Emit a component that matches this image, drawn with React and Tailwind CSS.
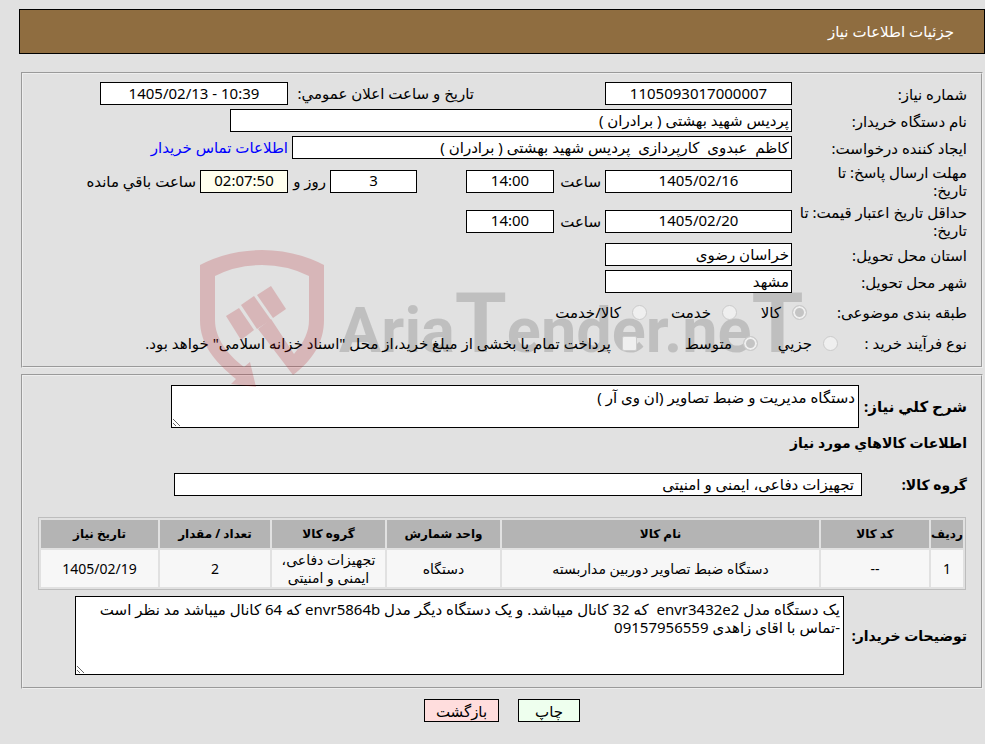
import React from 'react';

const fieldBase = 'h-[23px] shrink-0 border border-black px-[2px] pb-[2px] text-black outline-none';

const columns = [
  { title: 'ردیف', width: 'w-[32px]', value: '1' },
  { title: 'کد کالا', width: 'w-[108px]', value: '--' },
  { title: 'نام کالا', width: '', value: 'دستگاه ضبط تصاویر دوربین مداربسته' },
  { title: 'واحد شمارش', width: 'w-[113px]', value: 'دستگاه' },
  { title: 'گروه کالا', width: 'w-[113px]', value: 'تجهیزات دفاعی، ایمنی و امنیتی' },
  { title: 'تعداد / مقدار', width: 'w-[110px]', value: '2' },
  { title: 'تاریخ نیاز', width: 'w-[117px]', value: '1405/02/19' },
];

const Field = ({ id, value, className, label, dir, background = 'bg-white' }) => (
  <input
    id={id}
    type="text"
    readOnly
    dir={dir}
    aria-label={label}
    defaultValue={value}
    className={`${fieldBase} ${background} ${className}`}
  />
);

const Row = ({ id, label, children }) => (
  <div className="flex items-center">
    <label htmlFor={id} className="w-[175px] shrink-0 leading-[18px]">{label}</label>
    {children}
  </div>
);

const Choice = ({ type = 'radio', name, label, checked, className = '' }) => (
  <label className={`flex shrink-0 items-center gap-[11px] whitespace-nowrap ${className}`}>
    <input
      type={type}
      name={name}
      defaultChecked={checked}
      disabled
      className={`relative z-10 size-[15px] shrink-0 appearance-none border border-[#cbcbcb] bg-[#efefef] checked:bg-[#c4c4c4] checked:shadow-[inset_0_0_0_2px_#efefef] ${type === 'radio' ? 'rounded-full' : 'rounded-[2px]'}`}
    />
    <span>{label}</span>
  </label>
);

const Watermark = () => (
  <div dir="ltr" aria-hidden="true" className="pointer-events-none absolute top-[176px] left-[176px] flex items-start gap-[14px]">
    <svg width="126" height="138" viewBox="0 0 126 138" fill="#b30f18" className="opacity-20">
      <path d="M1 15 Q30 0 63 0 Q96 0 125 15 V70 C125 92 114 110 94 125 L59 79 L72 69 L95 104 C105 92 110 82 110 70 V26 Q88 15 63 15 Q37 15 16 26 V70 C16 88 28 104 45 117 L51 112 L57 137 L32 134 L37 129 C15 111 1 94 1 70 Z" />
      <path d="M27 66 L40 58 L55 80 L42 90 Z" />
      <path d="M42 55 L55 46 L72 70 L58 79 Z" />
      <path d="M58 45 L72 36 L87 59 L74 68 Z" />
    </svg>
    <span className="mt-[31px] font-['Roboto',sans-serif] text-[63px] leading-[100px] font-bold whitespace-nowrap text-black/15">
      Aria<span className="text-[84px] leading-none">T</span>ender.ne<span className="text-[84px] leading-none">T</span>
    </span>
  </div>
);

const App = () => (
  <div
    dir="rtl"
    className="min-h-screen bg-[#e1e1e1] py-[9px] pl-[19px] font-['Noto_Sans','DejaVu_Sans',sans-serif] text-[15px] text-black"
  >
    <header className="flex h-[45px] items-center border border-black bg-[#8f6d40] px-[30px] text-white">
      <h1>جزئیات اطلاعات نیاز</h1>
    </header>

    <section className="relative mx-[2px] mt-[18px] flex flex-col gap-1 [border:2px_groove_#eeeeee] pt-2 pr-[14px] pb-[11px]">
      <Row id="need-no" label="شماره نیاز:">
        <Field id="need-no" value="1105093017000007" className="w-[187px] text-center" />
        <label htmlFor="announce" className="mr-[131px] w-[186px] whitespace-nowrap">تاریخ و ساعت اعلان عمومي:</label>
        <Field id="announce" dir="ltr" value="1405/02/13 - 10:39" className="w-[188px] text-center" />
      </Row>
      <Row id="buyer" label="نام دستگاه خریدار:">
        <Field id="buyer" value="پردیس شهید بهشتی ( برادران )" className="w-[562px]" />
      </Row>
      <Row id="creator" label="ایجاد کننده درخواست:">
        <Field id="creator" value="کاظم  عبدوی  کارپردازی  پردیس شهید بهشتی ( برادران )" className="w-[500px]" />
        <a href="#contact" className="mr-1 text-[#0000ff]">اطلاعات تماس خریدار</a>
      </Row>
      <Row id="deadline" label={<>مهلت ارسال پاسخ: تا<br />تاریخ:</>}>
        <Field id="deadline" value="1405/02/16" className="w-[187px] text-center" />
        <label htmlFor="deadline-time" className="mr-1 w-[47px]">ساعت</label>
        <Field id="deadline-time" value="14:00" className="w-[88px] text-center" />
        <Field id="days" label="روز" value="3" className="mr-[49px] w-[87px] text-center" />
        <label htmlFor="days" className="mr-1 w-[38px] whitespace-nowrap">روز و</label>
        <Field id="left" value="02:07:50" background="bg-[#ffffee]" className="w-[88px] text-center" />
        <label htmlFor="left" className="mr-1 whitespace-nowrap">ساعت باقي مانده</label>
      </Row>
      <Row id="price-date" label={<>حداقل تاریخ اعتبار قیمت: تا<br />تاریخ:</>}>
        <Field id="price-date" value="1405/02/20" className="w-[187px] text-center" />
        <label htmlFor="price-time" className="mr-1 w-[47px]">ساعت</label>
        <Field id="price-time" value="14:00" className="w-[88px] text-center" />
      </Row>
      <Row id="province" label="استان محل تحویل:">
        <Field id="province" value="خراسان رضوی" className="w-[187px]" />
      </Row>
      <Row id="city" label="شهر محل تحویل:">
        <Field id="city" value="مشهد" className="w-[187px]" />
      </Row>
      <div className="flex h-[30px] items-center">
        <span className="w-[160px] shrink-0">طبقه بندی موضوعی:</span>
        <Choice name="subject" label="کالا" checked className="w-[70px]" />
        <Choice name="subject" label="خدمت" className="w-[90px]" />
        <Choice name="subject" label="کالا/خدمت" />
      </div>
      <div className="flex h-[24px] items-center">
        <span className="w-[129px] shrink-0">نوع فرآیند خرید :</span>
        <Choice name="process" label="جزیي" className="w-[80px]" />
        <Choice name="process" label="متوسط" checked className="w-[121px]" />
        <Choice
          type="checkbox"
          name="treasury"
          label={'پرداخت تمام یا بخشی از مبلغ خرید،از محل "اسناد خزانه اسلامی" خواهد بود.'}
        />
      </div>
      <Watermark />
    </section>

    <section className="mx-[2px] mt-[6px] [border:2px_groove_#eeeeee] px-[14px] pt-[9px] pb-[12px]">
      <div className="flex items-center">
        <label htmlFor="summary" className="w-[108px] shrink-0 font-bold">شرح کلي نیاز:</label>
        <textarea
          id="summary"
          readOnly
          defaultValue="دستگاه مدیریت و ضبط تصاویر (ان وی آر )"
          className="ml-[134px] h-[43px] flex-1 border border-black bg-white px-[3px] py-[2px] leading-[18px]"
        />
      </div>
      <h2 className="mt-[4px] text-[14px] leading-[22px] font-bold">اطلاعات کالاهاي مورد نیاز</h2>
      <div className="mt-[19px] flex items-center">
        <label htmlFor="group" className="w-[105px] shrink-0 text-[14px] font-bold">گروه کالا:</label>
        <input
          id="group"
          type="text"
          readOnly
          defaultValue="تجهیزات دفاعی، ایمنی و امنیتی"
          className="ml-[137px] h-[23px] flex-1 border border-black bg-white px-[7px] pb-[2px]"
        />
      </div>

      <div className="mt-[21px] mr-[1px] ml-[1px]">
        <table className="w-full table-fixed border-separate border-spacing-[2px] border border-[#bdbdbd] text-center text-[14px]">
          <thead>
            <tr className="h-[28px] bg-[#b4b4b4]">
              {columns.map((col) => (
                <th key={col.title} className={`${col.width} text-[12px] font-bold whitespace-nowrap`}>{col.title}</th>
              ))}
            </tr>
          </thead>
          <tbody>
            <tr className="h-[37px] bg-[#f7f7f7]">
              {columns.map((col) => (
                <td key={col.title} className="leading-[18px]">{col.value}</td>
              ))}
            </tr>
          </tbody>
        </table>
      </div>

      <div className="mt-[6px] flex items-center">
        <label htmlFor="notes" className="w-[123px] shrink-0 text-[14px] font-bold">توضیحات خریدار:</label>
        <textarea
          id="notes"
          readOnly
          defaultValue={'یک دستگاه مدل envr3432e2  که 32 کانال میباشد. و یک دستگاه دیگر مدل envr5864b که 64 کانال میباشد مد نظر است\n-تماس با اقای زاهدی 09157956559'}
          className="ml-[38px] h-[79px] flex-1 border border-black bg-white px-[3px] py-[3px] leading-[18px]"
        />
      </div>
    </section>

    <div className="mt-[10px] flex justify-center gap-[19px]">
      <button type="button" className="h-[23px] w-[62px] border border-black bg-[#eeffee] leading-[18px]">چاپ</button>
      <button type="button" className="h-[23px] w-[75px] border border-black bg-[#ffdddd] leading-[18px]">بازگشت</button>
    </div>
  </div>
);

export default App;
